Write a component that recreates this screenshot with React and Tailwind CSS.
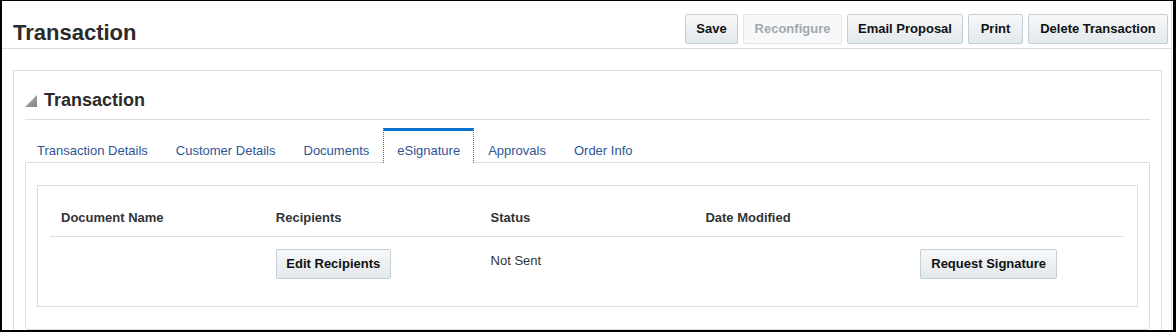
import React from 'react';

const btn =
  'h-[30px] rounded-[2px] border border-[#c4ced7] bg-gradient-to-b from-[#f7f8f9] to-[#e3e8eb] text-[13px] font-bold text-[#111] flex items-center justify-center whitespace-nowrap';

const tabs = ['Transaction Details', 'Customer Details', 'Documents', 'eSignature', 'Approvals', 'Order Info'];

export default function App() {
  return (
    <div className="w-[1176px] h-[332px] overflow-hidden bg-white border-black border-t border-l-2 border-r-[3px] border-b-2 font-['Liberation_Sans',Arial,sans-serif] text-[#333]">
      <div className="h-full mr-[1px] border-r border-[#dde3e8]">
        {/* page header */}
        <div className="h-[48px] flex justify-between border-b border-[#d6dfe6] pl-[11px] pr-[3px]">
          <h1 className="pt-[19px] text-[22px] leading-[25px] font-bold text-[#2b2b2b]">Transaction</h1>
          <div className="flex gap-[5px] pt-[13px]">
            <button className={`${btn} w-[53px]`}>Save</button>
            <button className="h-[30px] w-[99px] rounded-[2px] border border-[#e0e6ea] bg-[#f6f8f9] text-[13px] font-bold text-[#a3a8ad]">Reconfigure</button>
            <button className={`${btn} w-[116px]`}>Email Proposal</button>
            <button className={`${btn} w-[55px]`}>Print</button>
            <button className={`${btn} w-[140px]`}>Delete Transaction</button>
          </div>
        </div>

        {/* section */}
        <div className="mt-[21px] ml-[11px] mr-[9px] h-[400px] border-t border-x border-[#d6dfe6] px-[11px]">
          <div className="h-[49px] pt-[19px] flex items-start gap-[7px] border-b border-[#d6dfe6]">
            <svg width="12" height="12" viewBox="0 0 12 12" className="mt-[5px]">
              <defs>
                <linearGradient id="tri" x1="0" y1="0" x2="1" y2="1">
                  <stop offset="0" stopColor="#b4b8bc" />
                  <stop offset="1" stopColor="#7d8287" />
                </linearGradient>
              </defs>
              <polygon points="12,0 12,12 0,12" fill="url(#tri)" />
            </svg>
            <h2 className="text-[18px] leading-[21px] font-bold text-[#2b2b2b]">Transaction</h2>
          </div>

          {/* tabs */}
          <div className="mt-[8px] -ml-[2px] flex h-[34px]">
            {tabs.map(t =>
              t === 'eSignature' ? (
                <div key={t} className="relative z-10 h-[35px] bg-white border-x border-dotted border-x-[#5f6a74] border-t-[3px] [border-top-style:solid] border-t-[#0572ce] px-[13px] pt-[12px] text-[13px] leading-[15px] text-[#2e5596] whitespace-nowrap">
                  {t}
                </div>
              ) : (
                <div key={t} className="h-[34px] border-t-[3px] border-x border-transparent px-[13px] pt-[12px] text-[13px] leading-[15px] text-[#2e5596] whitespace-nowrap">
                  {t}
                </div>
              )
            )}
          </div>

          <div className="border border-[#d6dfe6] rounded-b-[4px] px-[11px] pt-[22px] pb-[22px]">
            <div className="border border-[#d6dfe6] pl-[12px] pr-[13px]">
              <div className="grid grid-cols-5 border-b border-[#d6dfe6] pt-[24px] pb-[11px] text-[13px] leading-[15px] font-bold">
                <div className="pl-[11px]">Document Name</div>
                <div className="pl-[11px]">Recipients</div>
                <div className="pl-[11px]">Status</div>
                <div className="pl-[11px]">Date Modified</div>
                <div />
              </div>
              <div className="grid grid-cols-5 items-start pt-[12px] pb-[27px] text-[13px]">
                <div />
                <div className="pl-[11px]">
                  <button className={`${btn} w-[115px]`}>Edit Recipients</button>
                </div>
                <div className="pl-[11px] pt-[4px] leading-[15px]">Not Sent</div>
                <div />
                <div className="pl-[11px]">
                  <button className={`${btn} w-[137px]`}>Request Signature</button>
                </div>
              </div>
            </div>
          </div>
        </div>
      </div>
    </div>
  );
}
